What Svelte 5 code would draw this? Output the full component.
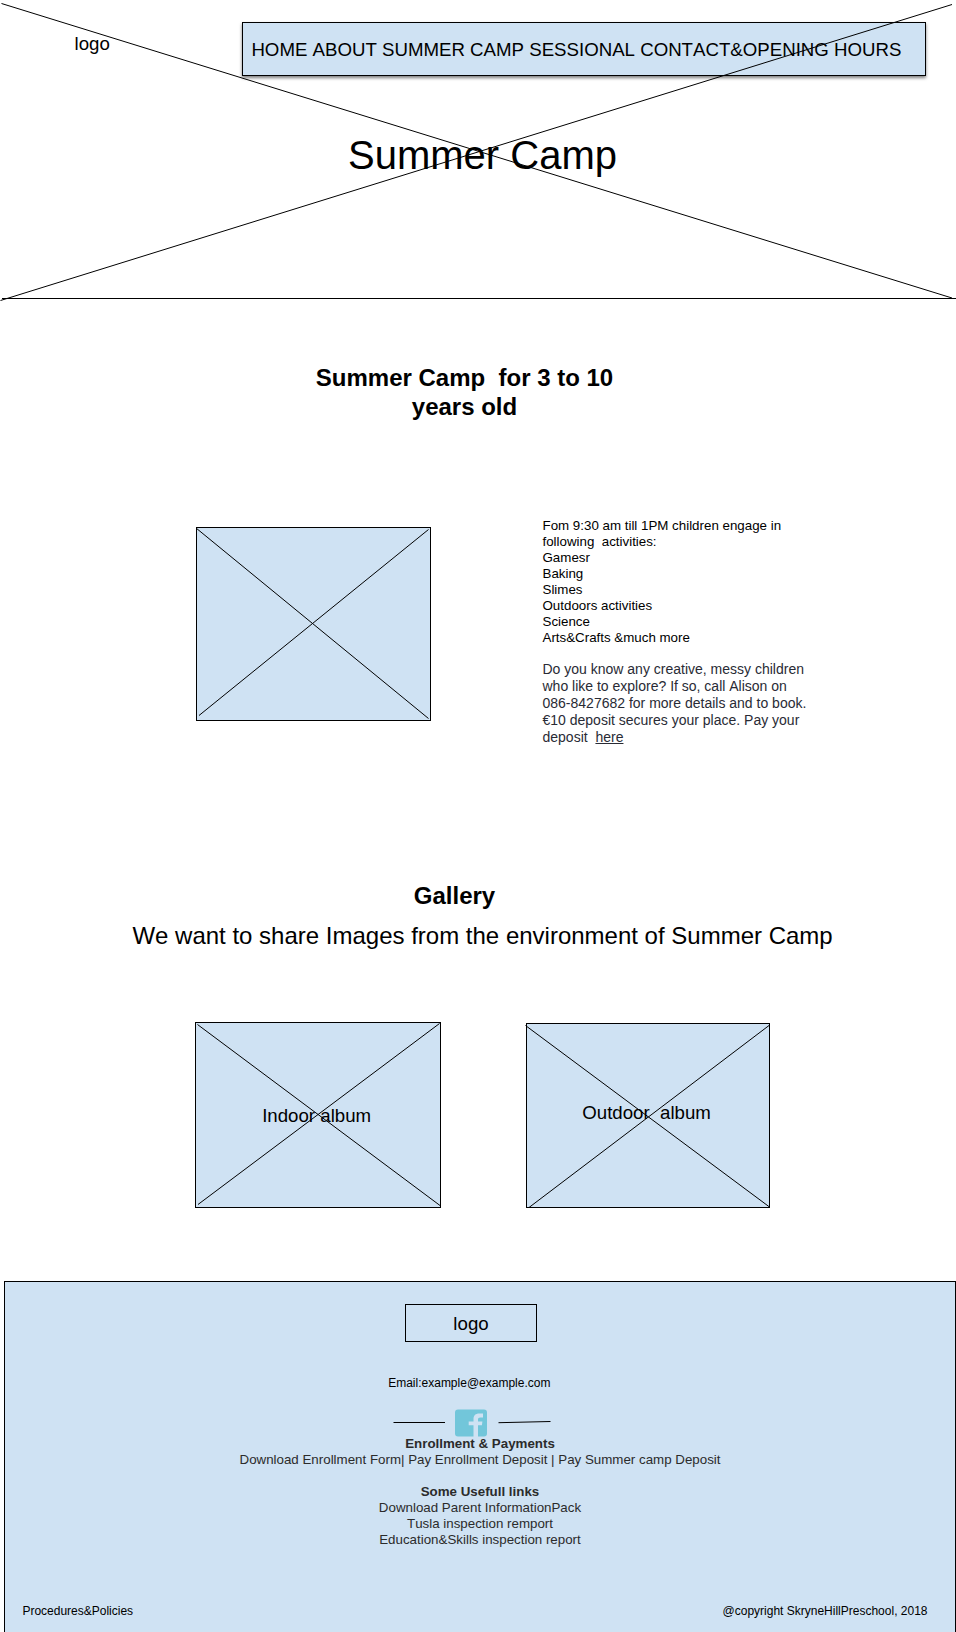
<script>
  const navItems = ['HOME', 'ABOUT', 'SUMMER CAMP', 'SESSIONAL', 'CONTACT&OPENING HOURS'];
  const activities = ['Gamesr', 'Baking', 'Slimes', 'Outdoors activities', 'Science', 'Arts&Crafts &much more'];
  const albums = [
    { kind: 'indoor', name: 'Indoor album', w: 246, h: 186, lines: [[2.5, 2.5, 245, 183.5], [3, 182.5, 244.5, 1.5]] },
    { kind: 'outdoor', name: 'Outdoor  album', w: 244, h: 185, lines: [[-0.5, 2.5, 243.5, 184], [3, 184.5, 243, 2.5]] }
  ];
  const links = ['Download Parent InformationPack', 'Tusla inspection remport', 'Education&Skills inspection report'];
</script>

{#snippet cross(w, h, lines)}
  <svg class="cross" width={w} height={h} viewBox="0 0 {w} {h}" aria-hidden="true">
    {#each lines as [x1, y1, x2, y2]}
      <line {x1} {y1} {x2} {y2} />
    {/each}
  </svg>
{/snippet}

<div class="page">
  <header>
    <div class="top">
      <span class="logo">logo</span>
      <nav>{#each navItems as item, i}{i ? ' ' : ''}<span>{item}</span>{/each}</nav>
    </div>
    <h1>Summer Camp</h1>
    {@render cross(956, 301, [[1.5, 3.5, 952, 298], [0.5, 300.5, 952, 4.5]])}
  </header>

  <main>
    <h2 class="intro">Summer Camp&nbsp; for 3 to 10<br />years old</h2>
    <section class="camp">
      <div class="picture">
        {@render cross(235, 194, [[0, 1, 232.5, 191.5], [3, 188.5, 232.5, 2.5]])}
      </div>
      <div class="copy">
        <p>Fom 9:30 am till 1PM children engage in<br />following&nbsp; activities:</p>
        <ul>
          {#each activities as activity}<li>{activity}</li>{/each}
        </ul>
        <p class="booking">
          Do you know any creative, messy children<br />who like to explore? If so, call Alison on<br
          />086-8427682 for more details and to book.<br />€10 deposit secures your place. Pay your<br
          />deposit&nbsp; <span class="here">here</span>
        </p>
      </div>
    </section>

    <h2 class="gallery">Gallery</h2>
    <p class="lead">We want to share Images from the environment of Summer Camp</p>
    <section class="albums">
      {#each albums as album}
        <div class="album {album.kind}">
          <span>{album.name}</span>
          {@render cross(album.w, album.h, album.lines)}
        </div>
      {/each}
    </section>
  </main>

  <footer>
    <div class="brand">logo</div>
    <p class="email">Email:example@example.com</p>
    <svg class="social" width="160" height="28" viewBox="0 0 160 28" aria-label="Facebook">
      <line x1="0.5" y1="13.5" x2="52" y2="13.5" />
      <path
        fill="#72c6da"
        d="M65 .5h26a3 3 0 0 1 3 3v21a3 3 0 0 1-3 3h-6V16.3h3.9l.5-3.7H85v-2c0-1.5.7-2.2 2.3-2.2h2.7V4.4h-3.7c-3.9 0-5.8 2.1-5.8 5.4v2.8h-4.8v3.7h4.8v11.2H65a3 3 0 0 1-3-3v-21a3 3 0 0 1 3-3Z"
      />
      <line x1="105.5" y1="13.7" x2="157.5" y2="12.5" />
    </svg>
    <div class="links">
      <strong>Enrollment &amp; Payments</strong>
      <p>Download Enrollment Form| Pay Enrollment Deposit | Pay Summer camp Deposit</p>
      <strong class="useful">Some Usefull links</strong>
      {#each links as link}<p>{link}</p>{/each}
    </div>
    <div class="legal">
      <span>Procedures&amp;Policies</span>
      <span>@copyright SkryneHillPreschool, 2018</span>
    </div>
  </footer>
</div>

<style>
  :global(body) {
    margin: 0;
    background: #fff;
  }
  .page {
    box-sizing: border-box;
    width: 956px;
    height: 1632px;
    overflow: hidden;
    font-family: 'Liberation Sans', Arial, sans-serif;
    font-size: 13.333px;
    line-height: 16px;
    color: #000;
    font-kerning: none;
  }
  .page * {
    box-sizing: border-box;
  }
  h1, h2, p, ul {
    margin: 0;
    padding: 0;
    list-style: none;
  }
  .cross {
    position: absolute;
    top: 0;
    left: 0;
    overflow: visible;
    pointer-events: none;
  }
  .cross line,
  .social line {
    stroke: #000;
    stroke-width: 1;
  }
  header {
    position: relative;
    height: 299px;
    padding-top: 22px;
  }
  header::after {
    content: '';
    display: block;
    height: 1px;
    margin: 120px 0 0 2px;
    background: #000;
  }
  .top {
    display: flex;
    justify-content: space-between;
    padding: 0 30px 0 74.6px;
    font-size: 18.667px;
    line-height: 22px;
  }
  .logo {
    padding-top: 11px;
  }
  nav {
    width: 684px;
    height: 54px;
    padding: 16px 0 0 8.4px;
    border: 1px solid #000;
    background: #cfe2f3;
    box-shadow: 0 2px 3px rgba(0, 0, 0, 0.5);
    white-space: nowrap;
  }
  h1 {
    margin-top: 56px;
    padding-left: 348px;
    font-size: 40px;
    font-weight: 400;
    line-height: 46px;
  }
  h2 {
    font-size: 24px;
    line-height: 29px;
    text-align: center;
  }
  .intro {
    margin-top: 64px;
    padding-right: 27px;
  }
  .camp {
    display: flex;
    gap: 111.5px;
    height: 228px;
    margin-top: 96px;
    padding-left: 196px;
  }
  .picture,
  .album {
    position: relative;
    background: #cfe2f3;
    box-shadow: inset 0 0 0 1px #000;
  }
  .picture {
    width: 235px;
    height: 194px;
    margin-top: 10px;
  }
  .copy {
    padding-top: 1px;
    white-space: nowrap;
  }
  .booking {
    margin-top: 15.4px;
    font-size: 14px;
    line-height: 16.95px;
    color: #292b35;
  }
  .here {
    text-decoration: underline;
  }
  .gallery {
    margin-top: 136px;
    padding-right: 47px;
  }
  .lead {
    margin-top: 11px;
    padding-left: 132.4px;
    font-size: 24px;
    line-height: 29px;
    white-space: nowrap;
  }
  .albums {
    display: flex;
    align-items: flex-end;
    gap: 85px;
    height: 186px;
    margin-top: 72px;
    padding-left: 195px;
  }
  .album {
    font-size: 18.667px;
    line-height: 22px;
    white-space: pre;
  }
  .indoor {
    width: 246px;
    height: 186px;
    padding: 83px 0 0 67.2px;
  }
  .outdoor {
    width: 244px;
    height: 185px;
    padding: 79px 0 0 56.3px;
  }
  footer {
    display: flex;
    flex-direction: column;
    height: 351px;
    margin: 73px 0 0 4px;
    padding-top: 22px;
    border: 1px solid #000;
    border-bottom: 0;
    background: #cfe2f3;
  }
  .brand {
    width: 132px;
    height: 38px;
    margin-left: 400px;
    padding-top: 8px;
    border: 1px solid #000;
    font-size: 18.667px;
    line-height: 22px;
    text-align: center;
  }
  .email {
    margin: 34px 0 0 383.2px;
    font-size: 12px;
    line-height: 14px;
  }
  .social {
    flex: none;
    margin: 19px 0 0 388px;
  }
  .links {
    display: flex;
    flex-direction: column;
    align-items: center;
    margin-top: -1px;
    color: #2b2b2b;
    position: relative;
  }
  .useful {
    margin-top: 16px;
  }
  .legal {
    display: flex;
    justify-content: space-between;
    margin-top: 56px;
    padding: 0 27.5px 0 17.4px;
    font-size: 12px;
    line-height: 14px;
  }
</style>
